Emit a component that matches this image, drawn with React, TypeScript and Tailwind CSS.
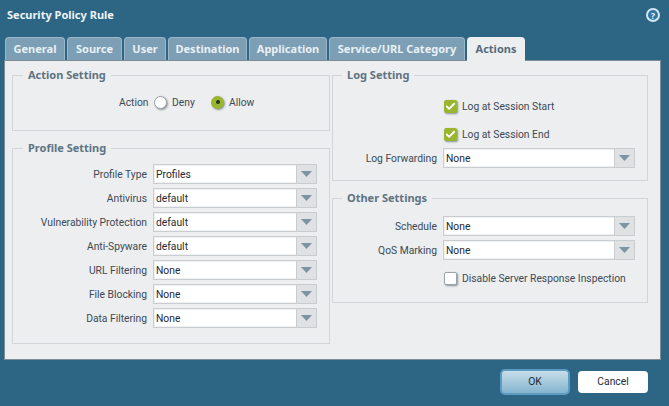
import { Check } from 'lucide-react';

const tabs = [
  { label: 'General', width: 'w-[60px]' },
  { label: 'Source', width: 'w-[55px]' },
  { label: 'User', width: 'w-[42px]' },
  { label: 'Destination', width: 'w-[79px]' },
  { label: 'Application', width: 'w-[78px]' },
  { label: 'Service/URL Category', width: 'w-[136px]' },
];

const profileRows = [
  { label: 'Profile Type', value: 'Profiles' },
  { label: 'Antivirus', value: 'default' },
  { label: 'Vulnerability Protection', value: 'default' },
  { label: 'Anti-Spyware', value: 'default' },
  { label: 'URL Filtering', value: 'None' },
  { label: 'File Blocking', value: 'None' },
  { label: 'Data Filtering', value: 'None' },
];

const bodyText = "font-['Roboto',sans-serif] text-[10.3px] leading-4";

function Select({ value, width }: { value: string; width: string }) {
  return (
    <div className={`${width} h-5 flex border border-[#c9cdcf] bg-white shadow-[inset_0_0_0_1px_#f0f1f2]`}>
      <div className={`${bodyText} flex-1 flex items-center pl-[2px] pt-[2px] text-[#1d2a33]`}>{value}</div>
      <div className="w-5 flex items-center justify-center bg-[#dfe1e2] border-l border-[#c9cdcf]">
        <svg width="11" height="6" viewBox="0 0 11 6">
          <path d="M0 0h11L5.5 6z" fill="#7b95a4" />
        </svg>
      </div>
    </div>
  );
}

function FormRow({ label, value, labelWidth, selectWidth }: { label: string; value: string; labelWidth: string; selectWidth: string }) {
  return (
    <div className="flex items-center gap-[6px]">
      <div className={`${labelWidth} ${bodyText} pt-[2px] text-right text-[#3c4a55] whitespace-nowrap`}>{label}</div>
      <Select value={value} width={selectWidth} />
    </div>
  );
}

function Fieldset({ title, className, legendMargin, children }: { title: string; className: string; legendMargin: string; children: React.ReactNode }) {
  return (
    <fieldset className={`border border-[#d3d6d8] ${className}`}>
      <legend className={`${legendMargin} px-[5px] text-[11px] font-bold leading-[14px] text-[#5f7382]`}>{title}</legend>
      {children}
    </fieldset>
  );
}

function Checkbox({ checked, label }: { checked: boolean; label: string }) {
  return (
    <div className="flex items-center gap-[5px] pl-[111px]">
      <div
        className={`w-[13px] h-[13px] shrink-0 rounded-[2px] flex items-center justify-center shadow-[1px_1px_2px_#8a9298] ${
          checked ? 'bg-[#9ab62f]' : 'bg-white border border-[#9aa3a9]'
        }`}
      >
        {checked && <Check size={11} strokeWidth={4} className="text-white" />}
      </div>
      <span className={`${bodyText} pt-[2px] text-[#3c4a55] whitespace-nowrap`}>{label}</span>
    </div>
  );
}

export default function App() {
  return (
    <div className="w-[669px] h-[406px] overflow-hidden bg-[#2d6685] font-['Noto_Sans',sans-serif] flex flex-col">
      {/* Title */}
      <div className="h-[37px] pl-[7px] pr-[9px] pt-[7px] flex items-start justify-between">
        <span className="text-[11px] leading-4 font-bold text-[#eef3f6]">Security Policy Rule</span>
        <div className="w-[14px] h-[14px] mt-px rounded-full bg-[#2f76a6] border-2 border-[#d5e7f2] flex items-center justify-center text-[9px] leading-none font-bold text-[#e8f2f8]">
          ?
        </div>
      </div>

      {/* Tabs */}
      <div className="h-[23px] pl-[5px] flex gap-[2px]">
        {tabs.map(tab => (
          <div
            key={tab.label}
            className={`${tab.width} flex items-center justify-center rounded-t-[4px] bg-[#7c9fb5] border-t border-x border-[#9db7c7] text-[11px] font-bold text-[#eaf0f4] whitespace-nowrap`}
          >
            {tab.label}
          </div>
        ))}
        <div className="relative z-10 -mb-px w-[58px] flex items-center justify-center rounded-t-[4px] bg-[#eceef0] text-[11px] font-bold text-[#566b7a]">
          Actions
        </div>
      </div>

      {/* Panel */}
      <div className="ml-[4px] w-[657px] h-[300px] bg-[#eceef0] border border-[#7f8b93] pl-[7px] pt-[7px] flex gap-[2px]">
        <div className="w-[318px] flex flex-col gap-[10px]">
          <Fieldset title="Action Setting" legendMargin="ml-[10px]" className="h-[63px]">
            <div className={`${bodyText} flex items-center pl-[106px] pt-[11px] text-[#3c4a55]`}>
              <span className="w-7 pt-[2px] whitespace-nowrap">Action</span>
              <div className="ml-[7px] w-[13px] h-[13px] rounded-full bg-white border border-[#9aa3a9] shadow-[1px_1px_2px_#8a9298]" />
              <span className="ml-[5px] pt-[2px] w-6">Deny</span>
              <div className="ml-[15px] w-[13px] h-[13px] rounded-full bg-[#9ab62f] flex items-center justify-center shadow-[1px_1px_2px_#8a9298]">
                <div className="w-1 h-1 rounded-full bg-[#26331a]" />
              </div>
              <span className="ml-[5px] pt-[2px]">Allow</span>
            </div>
          </Fieldset>
          <Fieldset title="Profile Setting" legendMargin="ml-[10px]" className="h-[203px]">
            <div className="flex flex-col gap-1 pt-[9px]">
              {profileRows.map(row => (
                <FormRow key={row.label} label={row.label} value={row.value} labelWidth="w-[134px]" selectWidth="w-[164px]" />
              ))}
            </div>
          </Fieldset>
        </div>

        <div className="w-[316px] flex flex-col gap-[10px]">
          <Fieldset title="Log Setting" legendMargin="ml-[9px]" className="h-[113px]">
            <div className="pt-[15px]">
              <Checkbox checked label="Log at Session Start" />
              <div className="mt-[10px]">
                <Checkbox checked label="Log at Session End" />
              </div>
              <div className="mt-[5px]">
                <FormRow label="Log Forwarding" value="None" labelWidth="w-[104px]" selectWidth="w-[192px]" />
              </div>
            </div>
          </Fieldset>
          <Fieldset title="Other Settings" legendMargin="ml-[9px]" className="h-[112px]">
            <div className="flex flex-col gap-1 pt-[11px]">
              <FormRow label="Schedule" value="None" labelWidth="w-[104px]" selectWidth="w-[192px]" />
              <FormRow label="QoS Marking" value="None" labelWidth="w-[104px]" selectWidth="w-[192px]" />
            </div>
            <div className="mt-[9px]">
              <Checkbox checked={false} label="Disable Server Response Inspection" />
            </div>
          </Fieldset>
        </div>
      </div>

      {/* Footer */}
      <div className="flex-1 flex items-center justify-end gap-2 pr-[21px] pb-[3px]">
        <button className={`${bodyText} w-[70px] h-[26px] flex items-center justify-center rounded-[5px] border-2 border-[#5b9cc0] bg-gradient-to-b from-[#c8dee9] to-[#84b4cf] text-[#1d2a33]`}>
          OK
        </button>
        <button className={`${bodyText} w-[70px] h-[22px] flex items-center justify-center rounded-[4px] bg-white text-[#1d2a33]`}>
          Cancel
        </button>
      </div>
    </div>
  );
}
